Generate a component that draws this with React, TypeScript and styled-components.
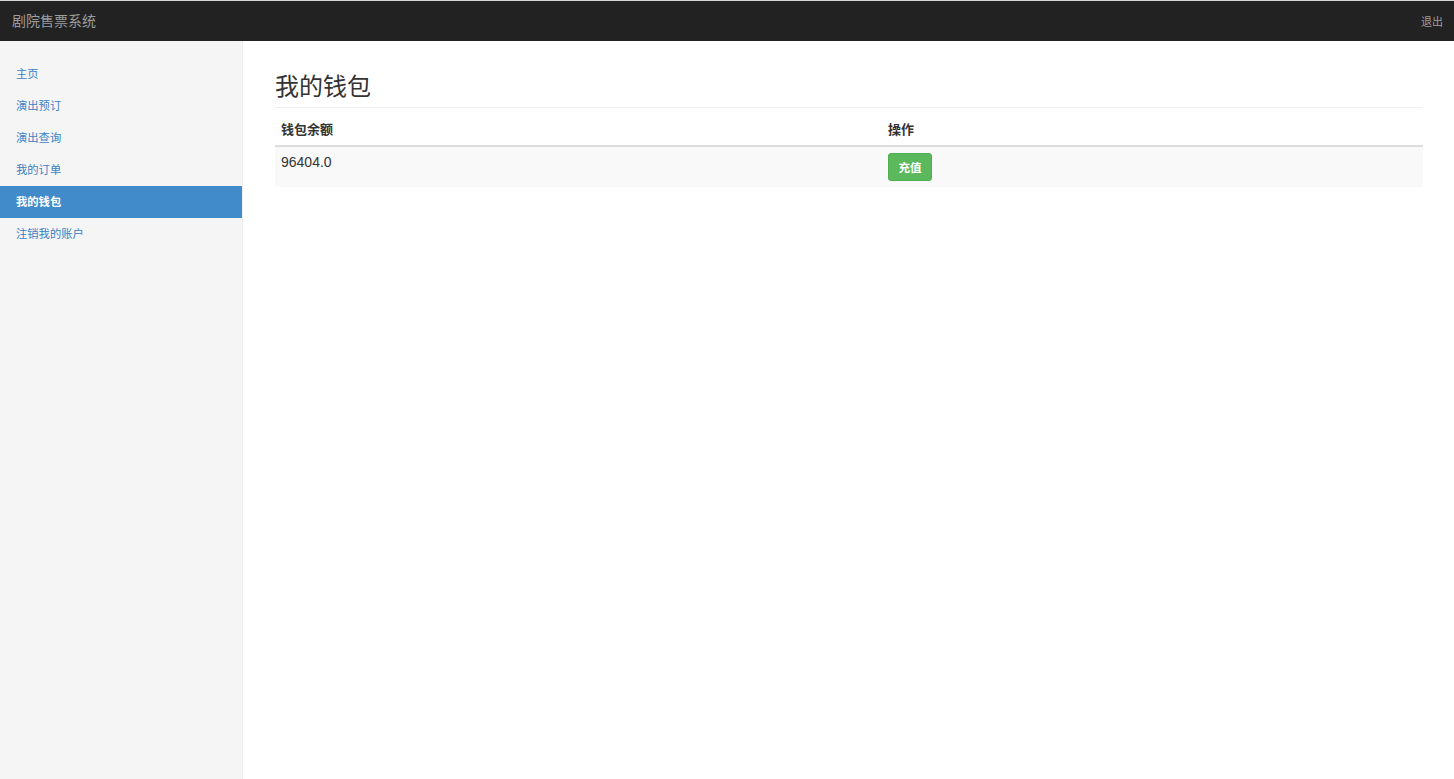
import React from "react";
import styled, { createGlobalStyle } from "styled-components";

const Global = createGlobalStyle`
  html, body { margin: 0; padding: 0; height: 100%; }
  body {
    font-family: "Liberation Sans", Arial, "Noto Sans CJK SC", sans-serif;
    font-size: 14px;
    color: #333;
    background: #fff;
  }
  #root { height: 100%; }
`;

const Page = styled.div`
  display: flex;
  flex-direction: column;
  height: 779px;
  overflow: hidden;
`;

const Navbar = styled.header`
  flex: 0 0 auto;
  height: 40px;
  border-top: 1px solid #d6d6d6;
  background: #222;
  display: flex;
  align-items: center;
  justify-content: space-between;
  padding: 0 11px 0 12px;
`;

const Brand = styled.a`
  font-family: "Liberation Sans", "Noto Sans CJK SC", sans-serif;
  font-size: 14px;
  color: #9d9d9d;
  text-decoration: none;
  line-height: 20px;
`;

const NavLink = styled.a`
  font-family: "Liberation Sans", "Noto Sans CJK SC", sans-serif;
  font-size: 11px;
  color: #9d9d9d;
  text-decoration: none;
  line-height: 20px;
  margin-top: 1px;
`;

const Body = styled.div`
  flex: 1;
  display: flex;
  min-height: 0;
`;

const Sidebar = styled.nav`
  width: 242px;
  flex: 0 0 242px;
  background: #f5f5f5;
  border-right: 1px solid #eee;
  padding-top: 17px;
  display: flex;
  flex-direction: column;
`;

const SideItem = styled.a<{ $active?: boolean }>`
  display: block;
  height: 32px;
  line-height: 32px;
  padding-left: 16px;
  font-family: "Liberation Sans", "Noto Sans CJK SC", sans-serif;
  font-size: 11.3px;
  text-decoration: none;
  color: ${(p) => (p.$active ? "#fff" : "#3b82c4")};
  background: ${(p) => (p.$active ? "#428bca" : "transparent")};
  font-weight: ${(p) => (p.$active ? 700 : 400)};
`;

const Main = styled.main`
  flex: 1;
  padding: 32px 31px 0 32px;
`;

const Title = styled.h1`
  margin: 0;
  font-family: "Liberation Sans", "Noto Sans CJK SC", sans-serif;
  font-weight: 400;
  font-size: 24px;
  line-height: 27px;
  color: #333;
  padding-bottom: 7px;
  border-bottom: 1px solid #eee;
`;

const Table = styled.table`
  width: 100%;
  border-collapse: collapse;
  margin-top: 4px;
`;

const Th = styled.th<{ $w?: string }>`
  text-align: left;
  font-family: "Liberation Sans", "Noto Sans CJK SC", sans-serif;
  font-weight: 700;
  font-size: 13px;
  line-height: 20px;
  color: #333;
  padding: 8px 6px 5px;
  border-bottom: 2px solid #ddd;
  width: ${(p) => p.$w || "auto"};
`;

const Tr = styled.tr`
  background: #f9f9f9;
`;

const Td = styled.td`
  vertical-align: top;
  padding: 5px 6px 6px;
  font-family: "Liberation Sans", "Noto Sans CJK SC", sans-serif;
  font-size: 14px;
  line-height: 20px;
  color: #333;
`;

const GreenButton = styled.button`
  font-family: "Liberation Sans", "Noto Sans CJK SC", sans-serif;
  font-size: 11.5px;
  font-weight: 700;
  color: #fff;
  background: #5cb85c;
  border: 1px solid #4cae4c;
  border-radius: 3px;
  height: 28px;
  width: 44px;
  padding: 0;
  margin-top: 1px;
  cursor: pointer;
`;

const items = ["主页", "演出预订", "演出查询", "我的订单", "我的钱包", "注销我的账户"];

export default function App() {
  return (
    <>
      <Global />
      <Page>
        <Navbar>
          <Brand href="#">剧院售票系统</Brand>
          <NavLink href="#">退出</NavLink>
        </Navbar>
        <Body>
          <Sidebar>
            {items.map((t) => (
              <SideItem key={t} href="#" $active={t === "我的钱包"}>
                {t}
              </SideItem>
            ))}
          </Sidebar>
          <Main>
            <Title>我的钱包</Title>
            <Table>
              <thead>
                <tr>
                  <Th $w="595px">钱包余额</Th>
                  <Th>操作</Th>
                </tr>
              </thead>
              <tbody>
                <Tr>
                  <Td>96404.0</Td>
                  <Td>
                    <GreenButton>充值</GreenButton>
                  </Td>
                </Tr>
              </tbody>
            </Table>
          </Main>
        </Body>
      </Page>
    </>
  );
}
